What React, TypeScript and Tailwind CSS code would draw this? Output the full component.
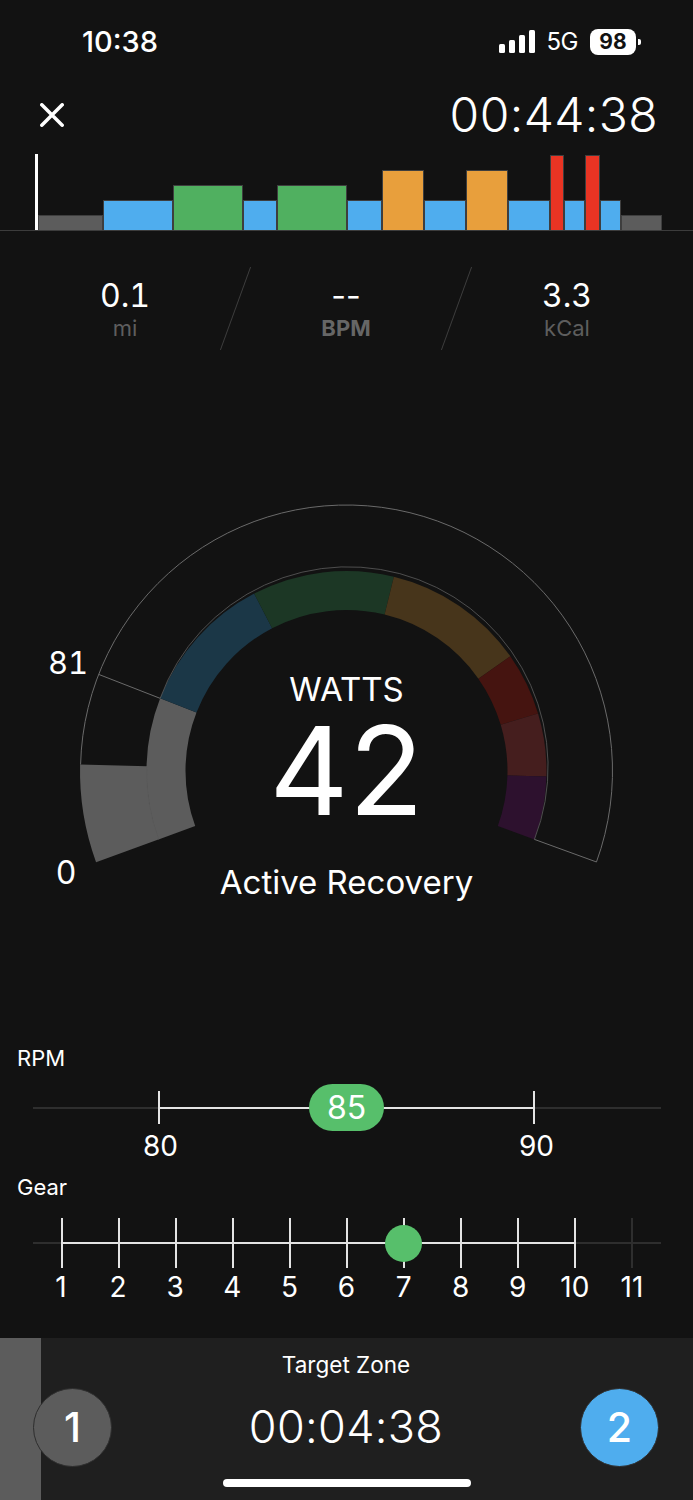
import React from "react";

const CX = 346.5;
const CY = 771;
const pt = (r: number, a: number) => {
  const t = (a * Math.PI) / 180;
  return `${(CX - r * Math.cos(t)).toFixed(2)} ${(CY - r * Math.sin(t)).toFixed(2)}`;
};
const seg = (a0: number, a1: number, r0: number, r1: number) =>
  `M${pt(r0, a0)} L${pt(r1, a0)} A${r1} ${r1} 0 ${a1 - a0 > 180 ? 1 : 0} 1 ${pt(r1, a1)} L${pt(r0, a1)} A${r0} ${r0} 0 ${a1 - a0 > 180 ? 1 : 0} 0 ${pt(r0, a0)} Z`;

const zones = [
  { a0: -20, a1: 21.3, fill: "#5c5c5c" },
  { a0: 21.3, a1: 62.5, fill: "#1b3747" },
  { a0: 62.5, a1: 103.7, fill: "#1c3725" },
  { a0: 103.7, a1: 145, fill: "#47351b" },
  { a0: 145, a1: 163.3, fill: "#451410" },
  { a0: 163.3, a1: 181.6, fill: "#451e1e" },
  { a0: 181.6, a1: 200, fill: "#2d112e" },
];

const bars = [
  "w-[65px] h-[15px] bg-[#5c5c5c]",
  "w-[70px] h-[30px] bg-[#4fadee]",
  "w-[70px] h-[45px] bg-[#50b060]",
  "w-[34.5px] h-[30px] bg-[#4fadee]",
  "w-[70px] h-[45px] bg-[#50b060]",
  "w-[34.5px] h-[30px] bg-[#4fadee]",
  "w-[42px] h-[60px] bg-[#e89f3c]",
  "w-[42px] h-[30px] bg-[#4fadee]",
  "w-[42px] h-[60px] bg-[#e89f3c]",
  "w-[42px] h-[30px] bg-[#4fadee]",
  "w-[14.5px] h-[75px] bg-[#e93423]",
  "w-[21px] h-[30px] bg-[#4fadee]",
  "w-[14.5px] h-[75px] bg-[#e93423]",
  "w-[21px] h-[30px] bg-[#4fadee]",
  "w-[41.5px] h-[15px] bg-[#5c5c5c]",
];

function StatusBar() {
  return (
    <div className="h-[83px] relative flex items-center pl-[82px] pr-[52.5px] justify-between">
      <span className="text-[29px] leading-none font-medium text-white">10:38</span>
      <div className="flex items-center">
        <div className="flex items-end gap-[3.7px] h-[22.5px]">
          <div className="w-[6px] h-[8.5px] bg-white rounded-[1.5px]" />
          <div className="w-[6px] h-[12.5px] bg-white rounded-[1.5px]" />
          <div className="w-[6px] h-[17.5px] bg-white rounded-[1.5px]" />
          <div className="w-[6px] h-[22.5px] bg-white rounded-[1.5px]" />
        </div>
        <span className="ml-[12px] text-[24px] leading-none text-white font-normal tracking-[-0.5px]">5G</span>
        <div className="ml-[12px] w-[46px] h-[26px] bg-white rounded-[8px] flex items-center justify-center">
          <span className="text-[21px] leading-none font-bold text-[#121212]">98</span>
        </div>
        <div className="ml-[1.5px] w-[3px] h-[6px] bg-white rounded-r-[2px]" />
      </div>
    </div>
  );
}

function Header() {
  return (
    <div className="h-[63px] flex items-center justify-between pl-[40px] pr-[35px]">
      <svg width="24" height="24" viewBox="0 0 24 24" className="block">
        <path d="M1.8 1.8 L22.2 22.2 M22.2 1.8 L1.8 22.2" stroke="#fff" strokeWidth="3.5" strokeLinecap="round" />
      </svg>
      <span className="text-[48px] leading-none font-light text-white tracking-[0.4px]">00:44:38</span>
    </div>
  );
}

function Chart() {
  return (
    <div className="mt-[8px] h-[77px] border-b border-[#3c3c3c] flex items-end pl-[34.5px]">
      <div className="w-[3px] h-[76px] bg-white" />
      {bars.map((b, i) => (
        <div key={i} className={`${b} border border-b-0 border-[#3e3e3e]`} />
      ))}
    </div>
  );
}

function Stat({ value, label, bold, plain }: { value: string; label: string; bold?: boolean; plain?: boolean }) {
  return (
    <div className="w-[220px] h-[83px] flex flex-col items-center">
      <div className={`mt-[13px] h-[32px] flex items-center text-[32px] leading-none text-white font-normal ${plain ? "" : "tabular-nums"}`}>
        {value}
      </div>
      <div className={`mt-[2px] h-[28px] flex items-center text-[22px] leading-none ${bold ? "font-bold text-[#666666]" : "text-[#5e5e5e]"}`}>
        {label}
      </div>
    </div>
  );
}

function Stats() {
  const Div = () => <div className="w-px h-[83px] bg-[#3e3e3e] skew-x-[-20deg]" />;
  return (
    <div className="mt-[36px] flex ml-[15px]">
      <Stat value="0.1" label="mi" />
      <Div />
      <Stat value="--" label="BPM" bold plain />
      <Div />
      <Stat value="3.3" label="kCal" />
    </div>
  );
}

function Gauge() {
  return (
    <div className="relative mt-[140px] h-[420px]">
      <svg width="693" height="420" viewBox="0 490 693 420" className="block">
        {zones.map((z, i) => (
          <path key={i} d={seg(z.a0, z.a1, 161, 200)} fill={z.fill} />
        ))}
        <path d={seg(-20, 1.4, 199.5, 266.5)} fill="#5c5c5c" />
        <path d={`M${pt(200, -20)} A200 200 0 0 1 ${pt(200, 1.4)}`} fill="none" stroke="#585858" strokeWidth="0.5" />
        <path d={`M${pt(200, 21.3)} A200 200 0 1 1 ${pt(200, 200)}`} fill="none" stroke="#626262" strokeWidth="0.75" />
        <path
          d={`M${pt(266, 1.4)} A266 266 0 1 1 ${pt(266, 200)} L${pt(200, 200)} M${pt(200, 21.3)} L${pt(266, 21.3)}`}
          fill="none"
          stroke="#6a6a6a"
          strokeWidth="1"
        />
      </svg>
      <div className="absolute left-[38px] top-[155px] w-[60px] text-center text-[31px] leading-[36px] text-white font-normal tabular-nums">81</div>
      <div className="absolute left-[36px] top-[365px] w-[60px] text-center text-[32px] leading-[36px] text-white font-normal">0</div>
      <div className="absolute left-0 right-0 top-[179px] text-center text-[33px] leading-[40px] text-white font-normal">WATTS</div>
      <div className="absolute left-0 right-0 top-[221px] text-center text-[123px] leading-[120px] text-white font-normal">42</div>
      <div className="absolute left-0 right-0 top-[371px] text-center text-[33px] leading-[42px] text-white">Active Recovery</div>
    </div>
  );
}

function RpmSlider() {
  return (
    <>
      <div className="mt-[134px] ml-[17px] h-[28px] flex items-center text-[22px] leading-none text-white">RPM</div>
      <div className="mt-[12px] relative h-[47px] ml-[33px] w-[628px] flex items-center">
        <div className="w-[125px] h-[2px] bg-[#2e2e2e]" />
        <div className="w-[2px] h-[33px] bg-[#e4e4e4]" />
        <div className="w-[373px] h-[2px] bg-[#e4e4e4]" />
        <div className="w-[2px] h-[33px] bg-[#e4e4e4]" />
        <div className="flex-1 h-[2px] bg-[#2e2e2e]" />
        <div className="absolute left-[276px] top-0 w-[75px] h-[47px] rounded-[23.5px] bg-[#57bf6b] flex items-center justify-center text-[32px] leading-none text-white">
          85
        </div>
      </div>
      <div className="ml-[130.5px] w-[436px] h-[30px] flex justify-between items-center">
        <span className="w-[60px] text-center text-[28px] leading-none text-white font-normal">80</span>
        <span className="w-[60px] text-center text-[28px] leading-none text-white font-normal">90</span>
      </div>
    </>
  );
}

function GearSlider() {
  const gears = [1, 2, 3, 4, 5, 6, 7, 8, 9, 10, 11];
  return (
    <>
      <div className="mt-[12px] ml-[17px] h-[28px] flex items-center text-[22px] leading-none text-white">Gear</div>
      <div className="mt-[17px] relative ml-[33px] w-[628px] h-[50px] grid grid-cols-11">
        <div className="absolute left-0 right-0 top-[24px] h-[2px] bg-[#2e2e2e]" />
        <div className="absolute left-[29px] w-[514px] top-[24px] h-[2px] bg-[#e4e4e4]" />
        {gears.map((g) => (
          <div key={g} className="flex justify-center">
            <div className={`relative w-[2px] h-[50px] ${g === 11 ? "bg-[#2e2e2e]" : "bg-[#e4e4e4]"}`} />
          </div>
        ))}
        <div className="absolute left-[352px] top-[6.5px] w-[37px] h-[37px] rounded-full bg-[#57bf6b]" />
      </div>
      <div className="mt-[4px] ml-[32.5px] w-[628px] h-[30px] grid grid-cols-11">
        {gears.map((g) => (
          <div key={g} className="flex items-center justify-center text-[28px] leading-none text-white font-normal">
            {g}
          </div>
        ))}
      </div>
    </>
  );
}

function Bottom() {
  return (
    <div className="relative mt-auto h-[162px] bg-[#1f1f1f] flex pl-[33px] pr-[34px]">
      <div className="absolute left-0 top-0 bottom-0 w-[41px] bg-[#5c5c5c]" />
      <div className="relative mt-[49.5px] w-[79px] h-[79px] rounded-full bg-[#5c5c5c] border border-[#2e2e2e] flex items-center justify-center text-[41px] leading-none font-medium text-white">
        1
      </div>
      <div className="flex-1 flex flex-col items-center">
        <div className="mt-[13px] h-[28px] flex items-center text-[22.5px] leading-none text-white">Target Zone</div>
        <div className="mt-[22px] h-[50px] flex items-center text-[45px] leading-none font-light text-white tracking-[0.3px]">00:04:38</div>
      </div>
      <div className="relative mt-[49.5px] w-[79px] h-[79px] rounded-full bg-[#4fadee] border border-[#2e2e2e] flex items-center justify-center text-[41px] leading-none font-medium text-white">
        2
      </div>
      <div className="absolute left-[223px] bottom-[13px] w-[248px] h-[8px] rounded-full bg-white" />
    </div>
  );
}

export default function App() {
  return (
    <div className="w-[693px] h-[1500px] bg-[#121212] flex flex-col overflow-hidden [font-family:Inter,sans-serif]">
      <StatusBar />
      <Header />
      <Chart />
      <Stats />
      <Gauge />
      <RpmSlider />
      <GearSlider />
      <Bottom />
    </div>
  );
}
